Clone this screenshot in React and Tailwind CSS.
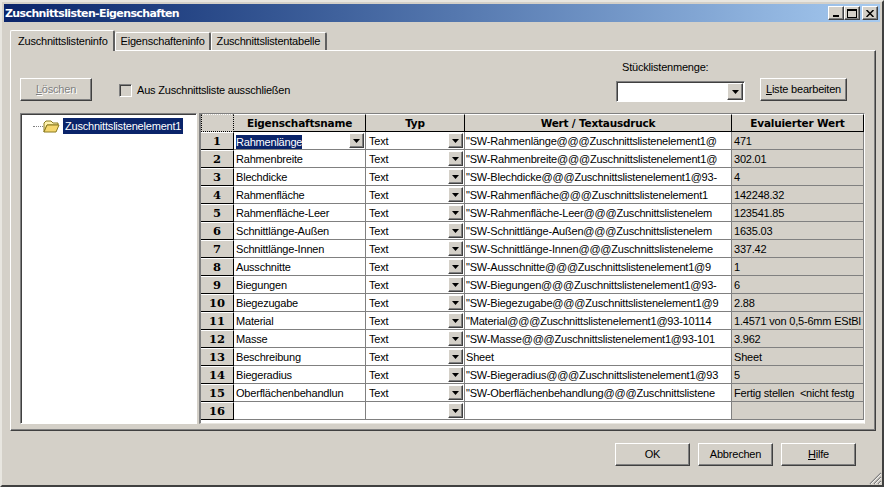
const rows = [
  ['Rahmenlänge', '"SW-Rahmenlänge@@@Zuschnittslistenelement1@', '471'],
  ['Rahmenbreite', '"SW-Rahmenbreite@@@Zuschnittslistenelement1@', '302.01'],
  ['Blechdicke', '"SW-Blechdicke@@@Zuschnittslistenelement1@93-', '4'],
  ['Rahmenfläche', '"SW-Rahmenfläche@@@Zuschnittslistenelement1', '142248.32'],
  ['Rahmenfläche-Leer', '"SW-Rahmenfläche-Leer@@@Zuschnittslistenelem', '123541.85'],
  ['Schnittlänge-Außen', '"SW-Schnittlänge-Außen@@@Zuschnittslistenelem', '1635.03'],
  ['Schnittlänge-Innen', '"SW-Schnittlänge-Innen@@@Zuschnittslisteneleme', '337.42'],
  ['Ausschnitte', '"SW-Ausschnitte@@@Zuschnittslistenelement1@9', '1'],
  ['Biegungen', '"SW-Biegungen@@@Zuschnittslistenelement1@93-', '6'],
  ['Biegezugabe', '"SW-Biegezugabe@@@Zuschnittslistenelement1@9', '2.88'],
  ['Material', '"Material@@@Zuschnittslistenelement1@93-10114', '1.4571 von 0,5-6mm EStBl'],
  ['Masse', '"SW-Masse@@@Zuschnittslistenelement1@93-101', '3.962'],
  ['Beschreibung', 'Sheet', 'Sheet'],
  ['Biegeradius', '"SW-Biegeradius@@@Zuschnittslistenelement1@93', '5'],
  ['Oberflächenbehandlun', '"SW-Oberflächenbehandlung@@@Zuschnittslistene', 'Fertig stellen  <nicht festg'],
  ['', '', ''],
];

const raised = 'border border-t-white border-l-white border-r-[#404040] border-b-[#404040] shadow-[inset_-1px_-1px_0_#808080]';
const sunken = 'border border-t-[#808080] border-l-[#808080] border-r-white border-b-white shadow-[inset_1px_1px_0_#404040]';

// little raised arrow button used by every combo box
const DropButton = ({ className = '' }) => (
  <div className={`w-[15px] h-[15px] bg-[#d4d0c8] flex items-center justify-center shrink-0 ${raised} ${className}`}>
    <svg width="7" height="4" viewBox="0 0 7 4"><path d="M0 0h7L3.5 4z" fill="#000" /></svg>
  </div>
);

const Button = ({ children, className = '', disabled = false }) => (
  <div className={`h-[23px] bg-[#d4d0c8] flex items-center justify-center whitespace-nowrap ${raised} ${disabled ? 'text-[#808080] [text-shadow:1px_1px_0_#fff]' : 'text-black'} ${className}`}>
    {children}
  </div>
);

const Tab = ({ children, className = '' }) => (
  <div className={`bg-[#d4d0c8] border-t border-l border-t-white border-l-white border-r-2 border-r-[#606060] rounded-t-[2px] flex items-center ${className}`}>
    {children}
  </div>
);

const HeaderCell = ({ children, className = '' }) => (
  <div className={`h-[18px] pt-[2px] border-t border-t-white border-r border-r-black border-b border-b-black flex items-center justify-center font-bold text-[10.5px] tracking-[-0.2px] bg-[#d4d0c8] font-['DejaVu_Sans'] ${className}`}>
    {children}
  </div>
);

const Row = ({ num, name, value, result, first }) => (
  <div className="flex h-[18px]">
    <div className="w-[33px] shrink-0 pt-[2px] bg-[#d4d0c8] border-t border-t-white border-r border-r-black border-b border-b-black flex items-center justify-center font-bold text-[11.5px] tracking-normal font-['DejaVu_Serif']">
      {num}
    </div>
    <div className="w-[132px] shrink-0 bg-white border-r border-b border-[#808080] flex items-center pl-[2px] overflow-hidden whitespace-nowrap relative">
      {first ? <span className="bg-[#0a246a] text-white leading-[14px] mt-[2px]">{name}</span> : <span className="pt-[2px]">{name}</span>}
      {first && <DropButton className="absolute right-[1px] top-[1px]" />}
    </div>
    <div className="w-[99px] shrink-0 bg-white border-r border-b border-[#808080] flex items-center justify-between pl-[3px] pr-[1px]">
      <span className="pt-[2px]">{name ? 'Text' : ''}</span>
      <DropButton />
    </div>
    <div className="w-[267px] shrink-0 pt-[2px] bg-white border-r border-b border-[#808080] flex items-center pl-[1px] overflow-hidden whitespace-nowrap">
      {value}
    </div>
    <div className="w-[132px] shrink-0 pt-[2px] bg-[#d4d0c8] border-r border-b border-[#808080] flex items-center pl-[2px] overflow-hidden whitespace-pre">
      {result}
    </div>
  </div>
);

export default function App() {
  return (
    <div className="w-[884px] h-[487px] bg-[#d4d0c8] overflow-hidden relative text-[11px] tracking-[-0.2px] text-black border-2 border-t-[#e8e6e0] border-l-[#e8e6e0] border-r-[#404040] border-b-[#404040] p-[2px] flex flex-col font-['Liberation_Sans']">
      {/* title bar */}
      <div className="h-[18px] shrink-0 bg-gradient-to-r from-[#0a246a] to-[#a6caf0] flex items-center justify-between pl-[1px] pr-[2px]">
        <span className="text-white font-bold text-[11px] font-['DejaVu_Sans'] tracking-[-0.62px] pt-[2px]">Zuschnittslisten-Eigenschaften</span>
        <div className="flex items-center">
          <div className={`w-[16px] h-[14px] bg-[#d4d0c8] flex items-end justify-center pb-[2px] ${raised}`}>
            <div className="w-[6px] h-[2px] bg-black" />
          </div>
          <div className={`w-[16px] h-[14px] bg-[#d4d0c8] flex items-center justify-center ${raised}`}>
            <div className="w-[10px] h-[9px] border border-t-2 border-black" />
          </div>
          <div className={`w-[16px] h-[14px] bg-[#d4d0c8] flex items-center justify-center ml-[2px] ${raised}`}>
            <svg width="8" height="7" viewBox="0 0 8 7"><path d="M0.5 0L7.5 7M7.5 0L0.5 7" stroke="#000" strokeWidth="1.5" /></svg>
          </div>
        </div>
      </div>

      {/* tabs */}
      <div className="flex items-end mt-[7px] ml-[6px] h-[21px] shrink-0">
        <Tab className="h-[21px] pl-[7px] pr-[5px] z-10 -mb-px">Zuschnittslisteninfo</Tab>
        <Tab className="h-[18px] pl-[5px] pr-[4px]">Eigenschafteninfo</Tab>
        <Tab className="h-[18px] px-[5px]">Zuschnittslistentabelle</Tab>
      </div>

      {/* tab panel */}
      <div className="h-[381px] shrink-0 ml-[6px] mr-[4px] border border-t-white border-l-white border-r-[#404040] border-b-[#404040] shadow-[inset_-1px_-1px_0_#808080] flex flex-col">
        <div className="h-[62px] shrink-0 flex items-start">
          <Button disabled className="w-[72px] mt-[27px] ml-[9px]"><span><span className="underline">L</span>öschen</span></Button>
          <div className="flex items-center mt-[31px] ml-[27px]">
            <div className={`w-[13px] h-[13px] bg-[#d4d0c8] ${sunken}`} />
            <span className="ml-[5px]">Aus Zuschnittsliste ausschließen</span>
          </div>
          <div className="ml-auto mr-[28px] flex gap-[15px] items-start">
            <div className="flex flex-col">
              <span className="ml-[6px] mt-[9px] leading-[15px]">Stücklistenmenge:</span>
              <div className={`w-[129px] h-[21px] mt-[6px] bg-white flex items-center justify-end pr-[1px] ${sunken}`}>
                <DropButton className="h-[17px] w-[16px]" />
              </div>
            </div>
            <Button className="w-[87px] mt-[27px]"><span><span className="underline">L</span>iste bearbeiten</span></Button>
          </div>
        </div>

        <div className="flex ml-[9px] gap-[2px]">
          {/* tree */}
          <div className={`w-[177px] h-[311px] bg-white pt-[4px] shrink-0 ${sunken}`}>
            <div className="flex items-center h-[16px]">
              <div className="w-[10px] ml-[12px] border-t border-dotted border-[#808080]" />
              <svg width="17" height="13" viewBox="0 0 17 13" className="shrink-0">
                <path d="M1 3L3 1h5l2 2h5v2H4L1 12z" fill="#fff3b0" stroke="#8a7a20" />
                <path d="M1 12L4 5h12l-3 7z" fill="#f5d76e" stroke="#8a7a20" />
              </svg>
              <span className="bg-[#0a246a] text-white ml-[3px] px-[2px] leading-[16px]">Zuschnittslistenelement1</span>
            </div>
          </div>

          {/* table */}
          <div className="w-[666px] h-[311px] bg-white border-t border-l-2 border-t-[#808080] border-l-[#808080] border-r border-b border-r-white border-b-[#e8e6e0] overflow-hidden">
            <div className="flex">
              <HeaderCell className="w-[33px] border-t-black border-l border-l-black border-dotted" />
              <HeaderCell className="w-[132px]">Eigenschaftsname</HeaderCell>
              <HeaderCell className="w-[99px]">Typ</HeaderCell>
              <HeaderCell className="w-[267px]">Wert / Textausdruck</HeaderCell>
              <HeaderCell className="w-[132px]">Evaluierter Wert</HeaderCell>
            </div>
            {rows.map((r, i) => (
              <Row key={i} num={i + 1} name={r[0]} value={r[1]} result={r[2]} first={i === 0} />
            ))}
          </div>
        </div>
      </div>

      {/* bottom buttons */}
      <div className="flex justify-end gap-[8px] mt-[12px] mr-[24px]">
        <Button className="w-[75px]">OK</Button>
        <Button className="w-[75px]">Abbrechen</Button>
        <Button className="w-[75px]"><span><span className="underline">H</span>ilfe</span></Button>
      </div>

      {/* resize grip */}
      <svg width="14" height="14" viewBox="0 0 14 14" className="absolute right-0 bottom-0">
        <path d="M13 2L2 13M13 6L6 13M13 10L10 13" stroke="#808080" strokeWidth="1.2" />
        <path d="M13 3L3 13M13 7L7 13M13 11L11 13" stroke="#fff" strokeWidth="0.8" />
      </svg>
    </div>
  );
}
